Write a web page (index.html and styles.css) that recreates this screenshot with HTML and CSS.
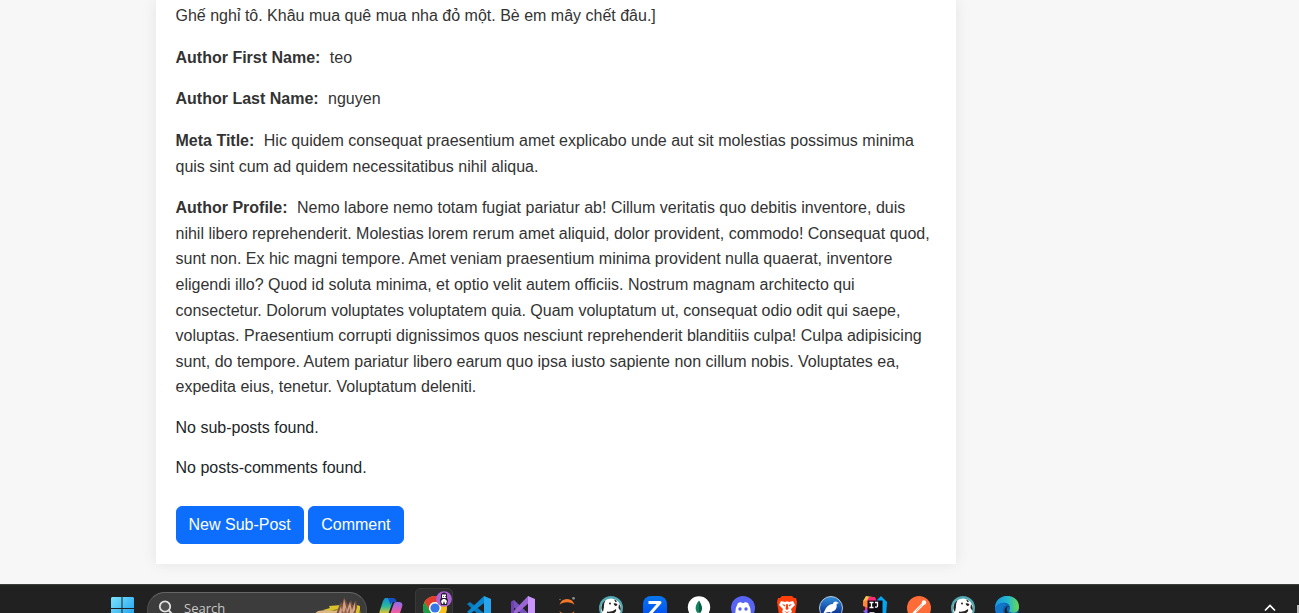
FILE: index.html
```html
<!DOCTYPE html>
<html lang="en">
<head>
<meta charset="utf-8">
<title>Post detail</title>
<link rel="stylesheet" href="styles.css">
</head>
<body>
<main class="page">
  <article class="card">
    <p class="field">Ghế nghỉ tô. Khâu mua quê mua nha đỏ một. Bè em mây chết đâu.]</p>
    <p class="field"><strong class="label">Author First Name:</strong> teo</p>
    <p class="field"><strong class="label">Author Last Name:</strong> nguyen</p>
    <p class="field"><strong class="label">Meta Title:</strong> Hic quidem consequat praesentium amet explicabo unde aut sit molestias possimus minima quis sint cum ad quidem necessitatibus nihil aliqua.</p>
    <p class="field"><strong class="label">Author Profile:</strong> Nemo labore nemo totam fugiat pariatur ab! Cillum veritatis quo debitis inventore, duis nihil libero reprehenderit. Molestias lorem rerum amet aliquid, dolor provident, commodo! Consequat quod, sunt non. Ex hic magni tempore. Amet veniam praesentium minima provident nulla quaerat, inventore eligendi illo? Quod id soluta minima, et optio velit autem officiis. Nostrum magnam architecto qui consectetur. Dolorum voluptates voluptatem quia. Quam voluptatum ut, consequat odio odit qui saepe, voluptas. Praesentium corrupti dignissimos quos nesciunt reprehenderit blanditiis culpa! Culpa adipisicing sunt, do tempore. Autem pariatur libero earum quo ipsa iusto sapiente non cillum nobis. Voluptates ea, expedita eius, tenetur. Voluptatum deleniti.</p>
    <p class="note">No sub-posts found.</p>
    <p class="note">No posts-comments found.</p>
    <div class="actions">
      <button class="btn">New Sub-Post</button>
      <button class="btn">Comment</button>
    </div>
  </article>
</main>
<footer class="taskbar">
  <svg class="start" viewBox="0 0 24 24">
    <defs><linearGradient id="win" x1="0" y1="0" x2="1" y2="1"><stop offset="0" stop-color="#7ae4fd"/><stop offset="1" stop-color="#1498ee"/></linearGradient></defs>
    <path fill="url(#win)" d="M2 0h9.500v11H1V1zM12.500 0H23l1 1v10H12.500zM1 12h10.500v12H1zM12.500 12H24v12H12.500z"/>
  </svg>
  <div class="search">
    <svg class="lens" viewBox="0 0 16 16"><circle cx="7" cy="6.500" r="5.200" fill="#505050" stroke="#e2e2e2" stroke-width="1.800"/><path d="M10.700 10.400 14.500 14.500" stroke="#e2e2e2" stroke-width="2"/></svg>
    <span class="search-text">Search</span>
    <svg class="scene" viewBox="0 0 54 18">
      <path fill="#9b8a22" d="M2 18q8-5 14-5l3-4 15-1 13 0 2 10z"/>
      <path fill="#d9c22e" d="m17 9 14-1 3 1-6 2-10 3-7-1 7-2zM40 9l8 0v3l-2 6h-8z"/>
      <path fill="#dcb77f" d="m1 18 5-4 8-1 9 1 5-2-2 6z"/>
      <path fill="#77503f" d="m24 18 3-9 2-4 2 2 1-7 4 8 3-5 2 6 3-6 1 7-2 8z"/>
      <path fill="#d3a083" d="m26 18 3-9 1 5 2-12 3 11 3-8 2 8 3-8 0 8-3 5z"/>
      <path fill="#95644f" d="m29 18 1-5 2 3 2-6 1 7 3-7 0 8z"/>
    </svg>
  </div>
  <nav class="apps">
    <span class="slot"><svg class="icon" viewBox="0 0 24 24">
      <defs><linearGradient id="cp1" x1="0" y1="0" x2="0" y2="1"><stop offset="0" stop-color="#168fcf"/><stop offset=".45" stop-color="#26b8a0"/><stop offset=".8" stop-color="#cfc33b"/></linearGradient><linearGradient id="cp2" x1="0" y1="0" x2="0" y2="1"><stop offset="0" stop-color="#8e6bf0"/><stop offset=".5" stop-color="#e85cab"/><stop offset="1" stop-color="#f98158"/></linearGradient></defs>
      <path fill="url(#cp1)" d="M6 2h9L10 16c-1 3-2 4-4 4H3c-3 0-3-3-2-6L4 5q1-2 2-3z"/>
      <path fill="#164fc3" d="M9 2h5c2 0 3 1 3.500 4H15c-2 0-3 1-3.500 3z"/>
      <path fill="url(#cp2)" d="M17 6h3c3 0 4 2 3 5l-3 9c-1 3-2 4-4 4H9l5-14q1-4 3-4z"/></svg></span>
    <span class="slot slot-active"><svg class="icon" viewBox="0 0 24 24">
      <circle cx="12" cy="12" r="12" fill="#fbc116"/><path fill="#e33b2e" d="M1.600 6A12 12 0 0 1 22.400 6H12a6 6 0 0 0-5.200 9z"/><path fill="#219b4b" d="M1.600 6A12 12 0 0 0 12 24l5-9-10 0z"/>
      <circle cx="12" cy="12" r="6" fill="#fff"/><circle cx="12" cy="12" r="4.600" fill="#3578e5"/></svg>
      <svg class="badge" viewBox="0 0 16 16"><circle cx="8" cy="8" r="7.800" fill="#ad62d8"/><path fill="#252029" d="M5 3q3-3 6 0v4l1 2-1 5H5L4 9l1-2z"/><path fill="#fff" d="M6 3.500h4v3.500H6zM7 8h2l2 2-1 3H9l-1-3-1 3H6l-1-3z"/><path fill="#252029" d="M7 5h.7v1H7zM9 5h.7v1H9z"/></svg></span>
    <span class="slot"><svg class="icon" viewBox="0 0 24 24"><path fill="#087bc0" d="M0 8 3 6l14 11v7z"/><path fill="#0b88cf" d="M0 16 17 0v7L3 18z"/><path fill="#27a6ee" d="m17 0 7 3v18l-7 3z"/></svg></span>
    <span class="slot"><svg class="icon" viewBox="0 0 24 24"><path fill="#7652bd" d="m0 6 3-2 15 14v6L0 9z"/><path fill="#9a65d5" d="M0 18 17 0l3 5L3 20l-3-2z"/><path fill="#6f43ad" d="M0 6 3 4v16l-3-2z"/><path fill="#c895fa" d="m17 0 7 3v18l-7 3z"/></svg></span>
    <span class="slot"><svg class="icon" viewBox="0 0 24 24"><path fill="#f37726" d="M4.500 9Q6 3 12 3t7.500 6Q17 6.300 12 6.300T4.500 9zM4.500 15q1.500 6 7.500 6t7.500-6q-2.500 2.700-7.500 2.700T4.500 15z"/><circle cx="18.500" cy="2.300" r="1.400" fill="#8d8d8d"/><circle cx="5" cy="3.500" r=".8" fill="#777"/></svg></span>
    <span class="slot"><svg class="icon" viewBox="0 0 24 24"><circle cx="12" cy="12" r="12" fill="#52a9b2"/><circle cx="12" cy="12.500" r="10" fill="#fff"/><path fill="#252323" d="M2.500 11Q3 6 6.500 4.500 4.500 8 5 11l-1 5q-2-2-1.500-5zM15 3.500q2 .3 3 2l-1.500.7zM20 8q2.500 3 1.500 7l-2-3zM14.500 7.500q2.500-1 4 1l-1.500 1.700q-2-.5-2.500-2.700zM8 15.500q5 1 9-2.500 1 3-3 4.500T8 18z"/><circle cx="11" cy="7.500" r="1" fill="#252323"/></svg></span>
    <span class="slot"><svg class="icon" viewBox="0 0 24 24"><defs><linearGradient id="za" x1="0" y1="0" x2="0" y2="1"><stop stop-color="#0877ed"/><stop offset="1" stop-color="#0048f5"/></linearGradient></defs><rect width="24" height="24" rx="8" fill="url(#za)"/><path fill="none" stroke="#fff" stroke-width="3" stroke-linejoin="round" d="M5.500 6.500H17L6 19h12"/></svg></span>
    <span class="slot"><svg class="icon" viewBox="0 0 24 24"><circle cx="12" cy="11.500" r="11.200" fill="#fff"/><path fill="#12845d" d="M12 4.500c-5 6-4 10 0 14z"/><path fill="#075d45" d="M12 4.500c4 6 4 10 0 14z"/><path stroke="#9daf9e" d="M12 16v6"/></svg></span>
    <span class="slot"><svg class="icon" viewBox="0 0 24 24"><circle cx="12" cy="12" r="12" fill="#5865f2"/><path fill="#fff" d="m7 7 3-1 1 1h2l1-1 3 1q3 5 2.700 10l-3.700 2-1-2h-6l-1 2-3.700-2Q4.500 11 7 7z"/><circle cx="9" cy="13" r="1.700" fill="#5865f2"/><circle cx="15" cy="13" r="1.700" fill="#5865f2"/></svg></span>
    <span class="slot"><svg class="icon" viewBox="0 0 24 24"><path fill="#fc3f0b" d="M7 0h10l2 2h2l1 4-2 13-8 5-8-5L2 6l1-4h2z"/><path fill="#fff" d="m6 5 4 1 2-.7 2 .7 4-1 2 4-4 4 1 3-5 4-5-4 1-3-4-4z"/><path fill="#fc3f0b" d="m7 8 3.500 1-1 1.500zM17 8l-3.500 1 1 1.500zM11.300 8h1.400l.8 5-1.500 1-1.500-1zM9 15l3 1 3-1-3 2z"/></svg></span>
    <span class="slot"><svg class="icon" viewBox="0 0 24 24"><defs><linearGradient id="bird" x1="0" y1="0" x2="0" y2="1"><stop stop-color="#3491dd"/><stop offset=".7" stop-color="#0a3998"/></linearGradient></defs><circle cx="12" cy="12" r="11.500" fill="url(#bird)" stroke="#b8c5d3"/><path fill="#fff" d="m4 18 3-6q3-4 7-4 0-2.500 3-2.500l3 1.500-2.500 1q1 5-3 7l-2 1v3h-1v-3q-3-.5-7.500 2z"/></svg></span>
    <span class="slot"><svg class="icon" viewBox="0 0 24 24"><path fill="#f9c64c" d="m3 0 7 1-5 7-5-3z"/><path fill="#ff2878" d="m6 1 6 0 2 5-5 5-7 5V8z"/><path fill="#ff853b" d="m0 5 5-1v8l-5-2z"/><path fill="#05a6f0" d="m14 4 4-4 6 6-1 14-7 3z"/><path fill="#8b5cf4" d="m0 15 7-3v10z"/><rect x="4.500" y="4.500" width="15" height="15" fill="#110b14"/><path fill="none" stroke="#fff" stroke-width="1.300" d="M6.500 6.500h4m-2 0v5m-2 0h4M12 6.500h2.500v3.500q0 1.500-2.500 1M6.500 17h5"/></svg></span>
    <span class="slot"><svg class="icon" viewBox="0 0 24 24"><circle cx="12" cy="12" r="12" fill="#ff6c37"/><path fill="none" stroke="#fff" stroke-width="2.500" stroke-linecap="round" d="m7 17 6-6 3-3"/><circle cx="17" cy="6.500" r="2.200" fill="#fff"/><path stroke="#ff936b" stroke-width=".7" d="m9 15 6-6"/></svg></span>
    <span class="slot"><svg class="icon" viewBox="0 0 24 24"><circle cx="12" cy="12" r="12" fill="#52a9b2"/><circle cx="12" cy="12.500" r="10" fill="#fff"/><path fill="#252323" d="M2.500 11Q3 6 6.500 4.500 4.500 8 5 11l-1 5q-2-2-1.500-5zM15 3.500q2 .3 3 2l-1.500.7zM20 8q2.500 3 1.500 7l-2-3zM14.500 7.500q2.500-1 4 1l-1.500 1.700q-2-.5-2.500-2.700zM8 15.500q5 1 9-2.500 1 3-3 4.500T8 18z"/><circle cx="11" cy="7.500" r="1" fill="#252323"/></svg></span>
    <span class="slot"><svg class="icon" viewBox="0 0 24 24"><defs><linearGradient id="edge"><stop stop-color="#1696df"/><stop offset=".55" stop-color="#25b9cc"/><stop offset="1" stop-color="#69d950"/></linearGradient></defs><circle cx="12" cy="12" r="12" fill="#0f62b5"/><path fill="url(#edge)" d="M0 12C0-4 24-4 24 11c0 5-5 7-9 5-2-1 0-2 0-4 0-7-11-7-15 0z"/><path fill="#1277c9" d="M0 12c3-5 9-6 12-3-4 0-5 4-4 8s5 6 8 6C7 26 0 20 0 12z"/><path fill="#212121" d="M14.500 10q-4.500 1-2 6 4 5 11 2l-1 3c-7 3-13-2-13-6 0-3 2-5 5-5z"/></svg></span>
  </nav>
  <div class="tray"><svg class="chevron" viewBox="0 0 12 8"><path fill="none" stroke="#fff" stroke-width="1.700" d="m1 6.500 5-5 5 5"/></svg><span class="tray-edge"></span></div>
</footer>
</body>
</html>
```
FILE: styles.css
```css
* { box-sizing: border-box; }
body {
  margin: 0;
  height: 613px;
  overflow: hidden;
  display: flex;
  flex-direction: column;
  background: #f7f7f7;
  color: #212529;
  font: 16px/1.5 "Liberation Sans", Arial, sans-serif;
}
.page {
  flex: none;
  height: 584px;
  padding: 0 0 20px 155.500px;
  display: flex;
}
.card {
  width: 800px;
  padding: 3.300px 20px 20px;
  background: #fff;
  box-shadow: 0 0 15px rgba(0, 0, 0, .08);
}
.field, .note { margin: 0 0 16px; }
.field { color: #333; line-height: 1.6; }
.label { margin-right: 5px; }
.actions { display: flex; gap: 4.450px; padding-top: 9.900px; }
.btn {
  height: 38px;
  padding: 6px 12px;
  border: 1px solid #0d6efd;
  border-radius: 6px;
  background: #0d6efd;
  color: #fff;
  font: inherit;
}
.taskbar {
  position: relative;
  flex: none;
  height: 29px;
  overflow: hidden;
  display: flex;
  align-items: flex-start;
  padding-left: 110px;
  border-top: 1px solid #3b3e3b;
  background: #212121;
}
.start { flex: none; width: 24px; height: 24px; margin: 12px 13px 0 0; }
.search {
  flex: none;
  width: 220px;
  height: 36px;
  margin-top: 7px;
  padding-left: 10px;
  display: flex;
  align-items: flex-start;
  overflow: hidden;
  border: 1px solid #515151;
  border-top-color: #666;
  border-radius: 18px;
  background: #3c3c3c;
}
.lens { flex: none; width: 16px; height: 16px; margin-top: 7px; }
.search-text {
  margin: 6px 0 0 10px;
  color: #c9c9c9;
  font: 13px/19px "Open Sans", sans-serif;
}
.scene { width: 54px; height: 18px; margin: 4px 0 0 auto; }
.apps { display: flex; margin-left: 2px; }
.slot { position: relative; width: 44px; height: 44px; padding: 11px 10px; }
.slot-active::before {
  content: "";
  position: absolute;
  inset: 3px 4px 0 2px;
  border: 1px solid #393939;
  border-radius: 5px;
  background: #2d2d2d;
}
.icon { position: relative; display: block; width: 24px; height: 24px; }
.badge { position: absolute; left: 23px; top: 6px; width: 16px; height: 16px; }
.tray { display: flex; margin-left: auto; }
.chevron { width: 12px; height: 8px; margin: 19px 21px 0 0; }
.tray-edge { width: 2px; height: 9px; margin-top: 20px; background: #b9b9b9; }
```
